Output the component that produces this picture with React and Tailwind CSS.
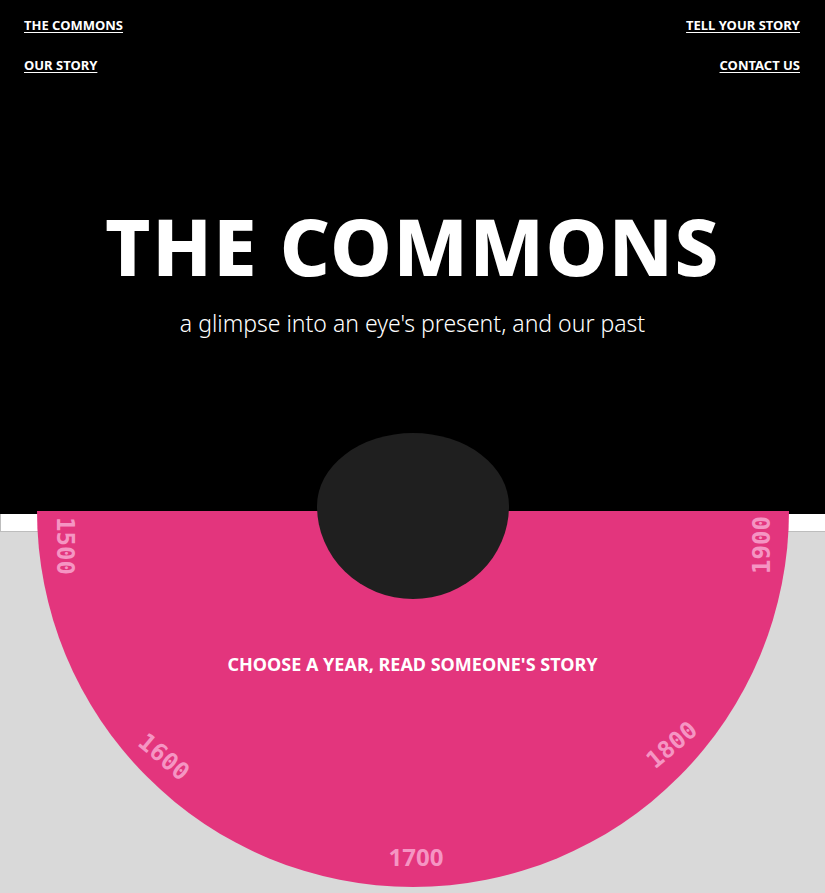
export default function App() {
  const years = [
    { y: "1500", cls: "-left-[1px] top-[23px] rotate-90", mono: true },
    { y: "1600", cls: "left-[98px] top-[234px] rotate-[40deg]", mono: true },
    { y: "1700", cls: "left-[352px] top-[334px]", mono: false },
    { y: "1800", cls: "left-[606px] top-[222px] -rotate-[40deg]", mono: true },
    { y: "1900", cls: "left-[696px] top-[22px] -rotate-90", mono: true },
  ];

  return (
    <div
      className="min-h-screen bg-[#d9d9d9] overflow-hidden"
      style={{ fontFamily: '"Noto Sans", "Open Sans", sans-serif' }}
    >
      <header className="bg-black h-[514px] flex flex-col">
        <nav className="flex justify-between pl-6 pr-[25px] pt-[16px] text-[13px] font-bold text-white">
          <div className="flex flex-col gap-[20px]">
            <a className="underline underline-offset-2">THE COMMONS</a>
            <a className="underline underline-offset-2">OUR STORY</a>
          </div>
          <div className="flex flex-col gap-[20px] items-end">
            <a className="underline underline-offset-2">TELL YOUR STORY</a>
            <a className="underline underline-offset-2">CONTACT US</a>
          </div>
        </nav>

        <div className="text-center text-white mt-[132px]">
          <h1 className="text-[78px] font-extrabold leading-none tracking-[1.5px]">
            THE COMMONS
          </h1>
          <p className="text-[23px] font-light mt-[21px]">
            a glimpse into an eye's present, and our past
          </p>
        </div>
      </header>

      <div className="h-[18px] bg-white border-l border-b border-[#bdbdbd]" />

      <div className="relative mx-auto -mt-[21px] w-[752px] h-[376px] bg-[#e3357d] rounded-b-full">
        <div className="absolute left-[280px] -top-[78px] w-[192px] h-[166px] bg-[#1f1f1f] rounded-[50%_50%_50%_50%/44%_44%_56%_56%]" />

        <p className="absolute left-0 right-0 top-[140px] text-center text-white text-[18px] font-bold">
          CHOOSE A YEAR, READ SOMEONE'S STORY
        </p>

        {years.map((it) => (
          <span
            key={it.y}
            className={`absolute text-[24px] font-bold text-[#f595c3] leading-none ${it.cls}`}
            style={
              it.mono
                ? { fontFamily: '"DejaVu Sans Mono", monospace' }
                : undefined
            }
          >
            {it.y}
          </span>
        ))}
      </div>
    </div>
  );
}
